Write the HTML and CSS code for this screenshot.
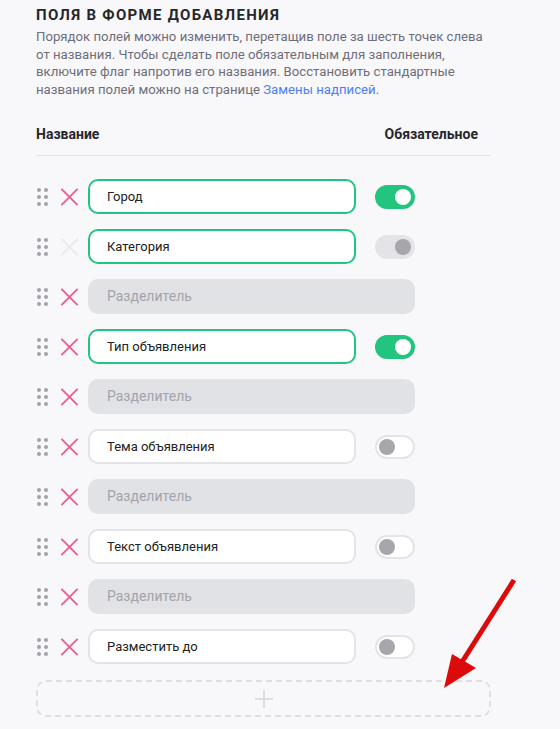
FILE: index.html
```html
<!DOCTYPE html>
<html lang="ru">
<head>
<meta charset="utf-8">
<link rel="stylesheet" href="styles.css">
</head>
<body>
<div class="panel">
  <h2 class="title">Поля в форме добавления</h2>
  <p class="desc">Порядок полей можно изменить, перетащив поле за шесть точек слева от названия. Чтобы сделать поле обязательным для заполнения, включите флаг напротив его названия. Восстановить стандартные названия полей можно на странице <a href="#">Замены надписей</a>.</p>

  <div class="head">
    <span>Название</span>
    <span>Обязательное</span>
  </div>

  <div class="rows">
    <div class="row">
      <span class="handle"><i></i><i></i><i></i><i></i><i></i><i></i></span>
      <span class="del"></span>
      <div class="field req">Город</div>
      <span class="toggle on"></span>
    </div>
    <div class="row">
      <span class="handle"><i></i><i></i><i></i><i></i><i></i><i></i></span>
      <span class="del off"></span>
      <div class="field req">Категория</div>
      <span class="toggle locked"></span>
    </div>
    <div class="row">
      <span class="handle"><i></i><i></i><i></i><i></i><i></i><i></i></span>
      <span class="del"></span>
      <div class="sep">Разделитель</div>
    </div>
    <div class="row">
      <span class="handle"><i></i><i></i><i></i><i></i><i></i><i></i></span>
      <span class="del"></span>
      <div class="field req">Тип объявления</div>
      <span class="toggle on"></span>
    </div>
    <div class="row">
      <span class="handle"><i></i><i></i><i></i><i></i><i></i><i></i></span>
      <span class="del"></span>
      <div class="sep">Разделитель</div>
    </div>
    <div class="row">
      <span class="handle"><i></i><i></i><i></i><i></i><i></i><i></i></span>
      <span class="del"></span>
      <div class="field">Тема объявления</div>
      <span class="toggle"></span>
    </div>
    <div class="row">
      <span class="handle"><i></i><i></i><i></i><i></i><i></i><i></i></span>
      <span class="del"></span>
      <div class="sep">Разделитель</div>
    </div>
    <div class="row">
      <span class="handle"><i></i><i></i><i></i><i></i><i></i><i></i></span>
      <span class="del"></span>
      <div class="field">Текст объявления</div>
      <span class="toggle"></span>
    </div>
    <div class="row">
      <span class="handle"><i></i><i></i><i></i><i></i><i></i><i></i></span>
      <span class="del"></span>
      <div class="sep">Разделитель</div>
    </div>
    <div class="row">
      <span class="handle"><i></i><i></i><i></i><i></i><i></i><i></i></span>
      <span class="del"></span>
      <div class="field">Разместить до</div>
      <span class="toggle"></span>
    </div>
  </div>

  <div class="add"><span class="plus"></span></div>
</div>

<svg class="arrow" width="90" height="130" viewBox="0 0 90 130">
  <line x1="74" y1="4" x2="22" y2="86" stroke="#dd0a0a" stroke-width="5"/>
  <polygon points="4,112 12,78 36,92" fill="#dd0a0a"/>
</svg>
</body>
</html>
```

FILE: styles.css
```css
html, body {
  margin: 0;
  padding: 0;
  background: #f8f8fb;
}
body {
  font-family: Roboto, "Noto Sans", sans-serif;
  color: #222;
  width: 560px;
  height: 729px;
  overflow: hidden;
  position: relative;
}
.panel {
  width: 455px;
  padding: 5px 0 0 36px;
}
.title {
  margin: 0;
  font-size: 15px;
  font-weight: 700;
  letter-spacing: 1.3px;
  text-transform: uppercase;
  color: #26262c;
  line-height: 20px;
}
.desc {
  margin: 3px 0 0;
  font-size: 13.2px;
  line-height: 17.5px;
  color: #6e6e78;
}
.desc a {
  color: #4d7ef0;
  text-decoration: none;
}
.head {
  margin-top: 27px;
  display: flex;
  justify-content: space-between;
  padding: 0 13px 12px 0;
  font-size: 14px;
  font-weight: 700;
  color: #26262c;
  line-height: 18px;
  border-bottom: 1px solid #e2e2e8;
}
.rows {
  margin-top: 23px;
  display: flex;
  flex-direction: column;
  gap: 15px;
}
.row {
  display: flex;
  align-items: center;
  height: 35px;
}
.handle {
  width: 10px;
  margin-left: 1px;
  display: grid;
  grid-template-columns: 3px 3px;
  column-gap: 4px;
  row-gap: 3px;
}
.handle i {
  width: 4px;
  height: 4px;
  border-radius: 50%;
  background: #a2a2aa;
}
.del {
  position: relative;
  width: 17px;
  height: 17px;
  margin-left: 14px;
}
.del::before, .del::after {
  content: "";
  position: absolute;
  left: -3px;
  top: 7.5px;
  width: 23px;
  height: 2px;
  background: #e8628e;
  transform: rotate(45deg);
}
.del::after {
  transform: rotate(-45deg);
}
.del.off::before, .del.off::after {
  background: #e9e9ee;
}
.field {
  box-sizing: border-box;
  margin-left: 10px;
  width: 268px;
  height: 35px;
  border: 2px solid #e3e3e8;
  border-radius: 10px;
  background: #fff;
  padding-left: 17px;
  font-size: 13px;
  line-height: 31px;
  color: #222;
}
.field.req {
  border-color: #20c57f;
}
.sep {
  box-sizing: border-box;
  margin-left: 10px;
  width: 327px;
  height: 35px;
  border-radius: 10px;
  background: #e1e2e6;
  padding-left: 19px;
  font-size: 14px;
  line-height: 35px;
  color: #a3a3ab;
}
.toggle {
  box-sizing: border-box;
  position: relative;
  margin-left: 19px;
  width: 40px;
  height: 24px;
  border-radius: 12px;
  background: #fff;
  border: 2px solid #e3e3e8;
}
.toggle::after {
  content: "";
  position: absolute;
  top: 2px;
  left: 2px;
  width: 16px;
  height: 16px;
  border-radius: 50%;
  background: #a6a6ab;
}
.toggle.on {
  background: #22c47e;
  border-color: #22c47e;
}
.toggle.on::after {
  left: auto;
  right: 2px;
  background: #fff;
}
.toggle.locked {
  background: #e3e3e8;
}
.toggle.locked::after {
  left: auto;
  right: 2px;
  background: #a6a6ab;
}
.add {
  margin-top: 16px;
  box-sizing: border-box;
  height: 37px;
  border: 2px dashed #dedee3;
  border-radius: 10px;
  display: flex;
  align-items: center;
  justify-content: center;
}
.plus {
  position: relative;
  width: 18px;
  height: 18px;
}
.plus::before, .plus::after {
  content: "";
  position: absolute;
  background: #dcdce1;
}
.plus::before {
  left: 0;
  top: 8px;
  width: 18px;
  height: 2px;
}
.plus::after {
  left: 8px;
  top: 0;
  width: 2px;
  height: 18px;
}
.arrow {
  position: absolute;
  left: 440px;
  top: 576px;
}
```
